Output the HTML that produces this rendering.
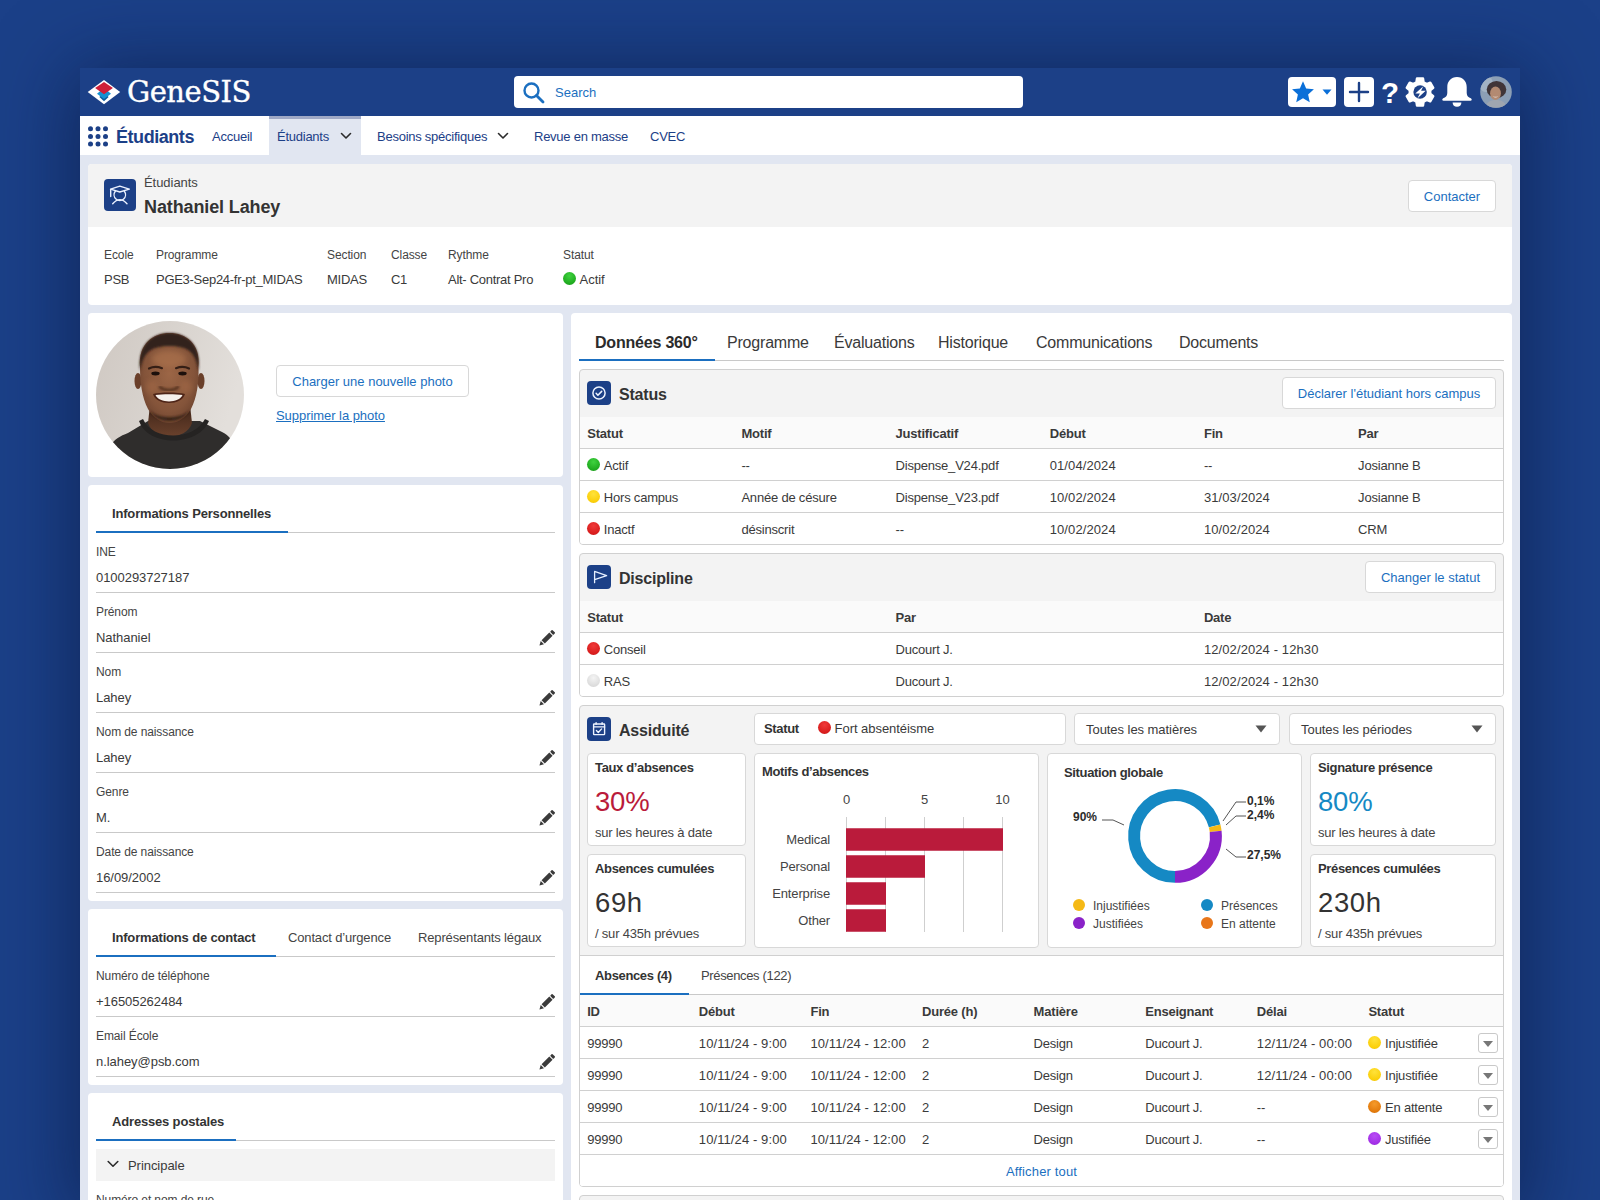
<!DOCTYPE html>
<html lang="fr">
<head>
<meta charset="utf-8">
<title>GeneSIS - Étudiants - Nathaniel Lahey</title>
<style>
*{box-sizing:border-box;margin:0;padding:0}
html,body{width:1600px;height:1200px;overflow:hidden}
body{font-family:"Liberation Sans",sans-serif;font-size:13px;color:#3a3a3a;
background:#1b4088;position:relative}
.abs{position:absolute}
#win{position:absolute;left:80px;top:68px;width:1440px;height:1140px;background:#e1e6f1;box-shadow:0 8px 72px 6px rgba(8,18,52,.55)}
#top{position:absolute;left:0;top:0;width:1440px;height:48px;background:#1c4087}
#logo-text{position:absolute;left:47px;top:4px;font-family:"DejaVu Serif","Liberation Serif",serif;font-size:29px;line-height:40px;color:#fff;letter-spacing:-.5px;-webkit-text-stroke:.35px #fff}
#search{position:absolute;left:434px;top:8px;width:509px;height:32px;background:#fff;border-radius:4px}
#search span{position:absolute;left:41px;top:0;line-height:34px;color:#1b6fc0;font-size:13px}
#nav{position:absolute;left:0;top:48px;width:1440px;height:39px;background:#fff}
#nav .app{position:absolute;left:36px;top:0;line-height:42px;font-size:18px;font-weight:bold;color:#1c4087;letter-spacing:-.45px}
#nav .it{position:absolute;top:0;height:39px;line-height:42px;color:#1c4087;font-size:13px;white-space:nowrap;letter-spacing:-.25px}
#nav .act{background:#e1e6f1;border-top:3px solid #9fa9c6;line-height:36px}
.card{position:absolute;background:#fff;border-radius:4px}
.btn{padding-top:1px;position:absolute;background:#fff;border:1px solid #d8d8d8;border-radius:4px;color:#1b6fc0;font-size:13px;text-align:center;white-space:nowrap}
.t{position:absolute;white-space:nowrap;line-height:16px;letter-spacing:-.05px}
.b{font-weight:bold;color:#333;letter-spacing:-.35px}
.lbl{color:#444;font-size:12px;letter-spacing:-.1px}
.blue{color:#1b6fc0}
.dot{display:inline-block;width:13px;height:13px;border-radius:50%;vertical-align:-1px;margin-right:3.600px}
.dg{background:radial-gradient(circle at 50% 30%,#3fd23f,#1faa1f 70%,#189018)}
.dy{background:radial-gradient(circle at 50% 30%,#ffe23a,#fbcf0a 70%,#e8b800)}
.dr{background:radial-gradient(circle at 50% 30%,#f03a3a,#d81c1c 70%,#b81212)}
.dw{background:radial-gradient(circle at 50% 30%,#f4f4f4,#dcdcdc 70%,#cfcfcf)}
.do{background:radial-gradient(circle at 50% 30%,#f59a2a,#e27a0c 70%,#c86606)}
.dp{background:radial-gradient(circle at 50% 30%,#b84cf5,#a22fe6 70%,#8a1fcc)}
.hr{position:absolute;height:1px;background:#c9c9c9}
.sec{position:absolute;border:1px solid #d0d0d0;border-radius:4px;background:#f3f3f3;overflow:hidden}
.ico{position:absolute;width:24px;height:24px;border-radius:4px;background:#1c4087}
.row{position:absolute;left:0;width:100%;height:32px;background:#fff;border-top:1px solid #d0d0d0}
.th{position:absolute;left:0;width:100%;background:#fafafa}
.c{position:absolute;top:0;line-height:33px;white-space:nowrap;font-size:13px;letter-spacing:-.2px}
.th .c{font-weight:bold;line-height:33px}
.kpi{position:absolute;background:#fff;border:1px solid #d8d8d8;border-radius:4px}
</style>
</head>
<body>
<div id="win">
  <div id="top">
    <svg class="abs" style="left:7px;top:11px" width="34" height="26" viewBox="0 0 34 26">
      <polygon points="17,1 33.200,13 17,25.200 0.700,13" fill="#fff"/>
      <polygon points="17,13.500 21.600,18 17,22.300 12.400,18" fill="#0b5c9e"/>
      <polygon points="17,9 24,14.700 17,19.900 10,14.700" fill="#1591d2"/>
      <polygon points="17,3 25.900,9.100 17,15.200 8.100,9.100" fill="#cf1f38"/>
    </svg>
    <div id="logo-text">GeneSIS</div>
    <div id="search">
      <svg class="abs" style="left:8px;top:5px" width="24" height="24" viewBox="0 0 24 24"><circle cx="9.5" cy="9.5" r="7" fill="none" stroke="#1b6fc0" stroke-width="2.4"/><path d="M14.5 14.5 L21 21" stroke="#1b6fc0" stroke-width="2.8" stroke-linecap="round"/></svg>
      <span>Search</span>
    </div>
    <!-- header right icons -->
    <div class="abs" style="left:1208px;top:9px;width:48px;height:30px;background:#fff;border-radius:4px">
      <svg class="abs" style="left:3px;top:2.500px" width="24" height="24" viewBox="0 0 22 22"><path d="M11 1.200 L13.900 7.800 L21 8.500 L15.700 13.300 L17.200 20.400 L11 16.700 L4.800 20.400 L6.300 13.300 L1 8.500 L8.100 7.800 Z" fill="#0a6fd8"/></svg>
      <svg class="abs" style="left:34px;top:12px" width="10" height="6" viewBox="0 0 10 6"><path d="M0.500 0.500 H9.500 L5 5.700Z" fill="#0a6fd8"/></svg>
    </div>
    <div class="abs" style="left:1264px;top:9px;width:30px;height:30px;background:#fff;border-radius:4px">
      <svg class="abs" style="left:0;top:0" width="30" height="30" viewBox="0 0 30 30"><path d="M15 6 V24 M6 15 H24" stroke="#1c4087" stroke-width="2.400" stroke-linecap="round"/></svg>
    </div>
    <div class="abs b" style="left:1301px;top:7.500px;width:18px;text-align:center;font-size:29.500px;line-height:34px;color:#fff;letter-spacing:0">?</div>
    <svg class="abs" style="left:1325px;top:8px" width="30" height="32" viewBox="0 0 30 32">
      <path d="M11.44 6.23 L11.99 2.43 L18.01 2.43 L18.56 6.23 L21.68 8.03 L25.25 6.61 L28.26 11.82 L25.24 14.19 L25.24 17.81 L28.26 20.18 L25.25 25.39 L21.68 23.97 L18.56 25.77 L18.01 29.57 L11.99 29.57 L11.44 25.77 L8.32 23.97 L4.75 25.39 L1.74 20.18 L4.76 17.81 L4.76 14.19 L1.74 11.82 L4.75 6.61 L8.32 8.03Z" fill="#fff" stroke="#fff" stroke-width="2.400" stroke-linejoin="round"/>
      <circle cx="15.100" cy="16" r="6.700" fill="#1c4087"/>
      <path d="M18.300 10.200 L10.300 17.500 H14.900 L12.300 22.400 L20.700 14.700 H16.100 Z" fill="#fff"/>
    </svg>
    <svg class="abs" style="left:1361px;top:8px" width="32" height="32" viewBox="0 0 32 32">
      <path d="M16 1 C10 1 6.300 5.500 6.300 11 V17 C6.300 20 4.500 21.500 2.200 22.300 C0.800 22.900 1 24.800 2.600 24.800 H29.400 C31 24.800 31.200 22.900 29.800 22.300 C27.500 21.500 25.700 20 25.700 17 V11 C25.700 5.500 22 1 16 1 Z" fill="#fff"/>
      <path d="M11.600 26.400 H20.400 C20.400 29 18.600 30.700 16 30.700 C13.400 30.700 11.600 29 11.600 26.400Z" fill="#fff"/>
    </svg>
    <svg class="abs" style="left:1400px;top:8px" width="32" height="32" viewBox="0 0 32 32">
      <defs><clipPath id="av"><circle cx="16" cy="16" r="15.800"/></clipPath><filter id="avb" x="-30%" y="-30%" width="160%" height="160%"><feGaussianBlur stdDeviation=".7"/></filter></defs>
      <g clip-path="url(#av)"><rect width="32" height="32" fill="#8c9fb5"/>
      <g filter="url(#avb)">
      <ellipse cx="6" cy="8" rx="7" ry="8" fill="#a3b3c4"/>
      <path d="M5 34 C6 26 10 24 16 24 C22 24 26 26 27 34Z" fill="#9fa6b0"/>
      <ellipse cx="16.500" cy="13.500" rx="9.800" ry="8.600" fill="#3f3538"/>
      <ellipse cx="15.500" cy="17.200" rx="5.400" ry="6.800" fill="#b38a72"/>
      <path d="M12.600 20.300 Q15.500 22.800 18.400 20.300 Q15.500 21.300 12.600 20.300Z" fill="#f3e8e2"/>
      </g></g>
    </svg>
  </div>
  <div id="nav">
    <svg class="abs" style="left:8px;top:10px" width="20" height="21" viewBox="0 0 20 21" fill="#1c4087"><circle cx="2.5" cy="2.8" r="2.500"/><circle cx="2.5" cy="10.399999999999999" r="2.500"/><circle cx="2.5" cy="18.0" r="2.500"/><circle cx="10.0" cy="2.8" r="2.500"/><circle cx="10.0" cy="10.399999999999999" r="2.500"/><circle cx="10.0" cy="18.0" r="2.500"/><circle cx="17.5" cy="2.8" r="2.500"/><circle cx="17.5" cy="10.399999999999999" r="2.500"/><circle cx="17.5" cy="18.0" r="2.500"/></svg>
    <div class="app">Étudiants</div>
    <div class="it" style="left:132px">Accueil</div>
    <div class="it act" style="left:189px;width:92px;padding-left:8px">Étudiants</div>
    <div class="it" style="left:297px">Besoins spécifiques</div>
    <div class="it" style="left:454px">Revue en masse</div>
    <div class="it" style="left:570px">CVEC</div>
    <svg class="abs" style="left:260px;top:16px" width="12" height="8" viewBox="0 0 12 8"><path d="M1.500 1.500 L6 6 L10.500 1.500" fill="none" stroke="#2b2b2b" stroke-width="1.600" stroke-linecap="round" stroke-linejoin="round"/></svg>
    <svg class="abs" style="left:417px;top:16px" width="12" height="8" viewBox="0 0 12 8"><path d="M1.500 1.500 L6 6 L10.500 1.500" fill="none" stroke="#2b2b2b" stroke-width="1.600" stroke-linecap="round" stroke-linejoin="round"/></svg>
  </div>

  <!-- record header -->
  <div class="card" id="rec" style="left:8px;top:96px;width:1424px;height:141px;overflow:hidden">
    <div class="abs" style="left:0;top:0;width:100%;height:63px;background:#f3f3f3"></div>
    <div class="abs" style="left:16px;top:15.400px;width:32px;height:32px;border-radius:4px;background:#1c4087">
      <svg width="32" height="32" viewBox="0 0 32 32" fill="none" stroke="#eaf1ff" stroke-width="1.400" stroke-linejoin="round" stroke-linecap="round">
        <path d="M6.600 10.200 L15.800 7.100 L25.300 10.200 L15.800 13 Z"/><path d="M6.700 10.500 V17.600"/><path d="M11.300 12.300 A5.700 5.700 0 1 0 20.300 12.300"/><path d="M8.700 24.700 Q15.800 16.600 23 24.700"/>
      </svg>
    </div>
    <div class="t" style="left:56px;top:11px;color:#444">Étudiants</div>
    <div class="t b" style="left:56px;top:31px;font-size:18px;line-height:24px;letter-spacing:-.12px">Nathaniel Lahey</div>
    <div class="btn" style="left:1320px;top:16px;width:88px;height:32px;line-height:30px">Contacter</div>
    <div class="t lbl" style="left:16px;top:82.600px">Ecole</div><div class="t" style="left:16px;top:108.200px;letter-spacing:-.28px">PSB</div>
    <div class="t lbl" style="left:68px;top:82.600px">Programme</div><div class="t" style="left:68px;top:108.200px;letter-spacing:-.28px">PGE3-Sep24-fr-pt_MIDAS</div>
    <div class="t lbl" style="left:239px;top:82.600px">Section</div><div class="t" style="left:239px;top:108.200px;letter-spacing:-.28px">MIDAS</div>
    <div class="t lbl" style="left:303px;top:82.600px">Classe</div><div class="t" style="left:303px;top:108.200px;letter-spacing:-.28px">C1</div>
    <div class="t lbl" style="left:360px;top:82.600px">Rythme</div><div class="t" style="left:360px;top:108.200px;letter-spacing:-.28px">Alt- Contrat Pro</div>
    <div class="t lbl" style="left:475px;top:82.600px">Statut</div><div class="t" style="left:475px;top:108.200px"><span class="dot dg"></span>Actif</div>
  </div>
  <!-- photo card -->
  <div class="card" style="left:8px;top:245px;width:475px;height:164px"></div>
  <svg class="abs" style="left:16px;top:253px" width="148" height="148" viewBox="0 0 148 148">
<defs><clipPath id="pc"><circle cx="74" cy="74" r="74"/></clipPath>
<linearGradient id="pbg" x1="0" y1="0" x2="1" y2="0.300"><stop offset="0" stop-color="#cfc8c2"/><stop offset=".55" stop-color="#d9d4cf"/><stop offset="1" stop-color="#e3dfdb"/></linearGradient>
<radialGradient id="skin" cx="50%" cy="45%" r="70%"><stop offset="0" stop-color="#9c6646"/><stop offset=".6" stop-color="#84543a"/><stop offset="1" stop-color="#5c3726"/></radialGradient>
<linearGradient id="neck" x1="0" y1="0" x2="0" y2="1"><stop offset="0" stop-color="#3e2418"/><stop offset="1" stop-color="#6a412c"/></linearGradient>
<filter id="b1" x="-20%" y="-20%" width="140%" height="140%"><feGaussianBlur stdDeviation="1.200"/></filter>
<filter id="b2" x="-30%" y="-30%" width="160%" height="160%"><feGaussianBlur stdDeviation="2.500"/></filter></defs>
<g clip-path="url(#pc)">
<rect width="148" height="148" fill="url(#pbg)"/>
<path d="M8 148 C10 126 16 118 32 112 L52 100 L104 100 L124 110 C138 116 142 128 144 148 Z" fill="#2f2d2c"/>
<path d="M54 84 L52 102 C58 120 90 120 96 102 L94 84 Z" fill="url(#neck)"/>
<path d="M47 98 C56 120 98 120 109 98 L113 100 C102 126 52 126 43 100 Z" fill="#252322"/>
<ellipse cx="42" cy="60" rx="3.500" ry="8" fill="#6a3f2a"/><ellipse cx="105" cy="60" rx="3.500" ry="8" fill="#6a3f2a"/>
<path d="M44 46 C42 22 58 12 73.500 12 C89 12 105 22 102.500 46 C103 62 101 76 95 88 C89 98 81 102 73.500 102 C66 102 58 98 52 88 C46 76 44 62 44 46 Z" fill="url(#skin)"/>
<path d="M44 50 C41 22 58 12 73.500 12 C89 12 106 22 102.500 50 C100 34 95 25 73.500 25 C52 25 47 34 44 50 Z" fill="#33211a" filter="url(#b1)"/>
<ellipse cx="73" cy="38" rx="17" ry="8" fill="#b07650" opacity=".55" filter="url(#b2)"/>
<ellipse cx="56" cy="66" rx="6" ry="7" fill="#a66c48" opacity=".5" filter="url(#b2)"/><ellipse cx="90" cy="66" rx="6" ry="7" fill="#a66c48" opacity=".5" filter="url(#b2)"/>
<path d="M53 47.500 Q59 44.500 66 47.200 M80 47.200 Q87 44.500 93 47.500" stroke="#24140e" stroke-width="2.200" fill="none" stroke-linecap="round" opacity=".85"/>
<ellipse cx="59.500" cy="52.500" rx="4.200" ry="1.900" fill="#1c100c"/><ellipse cx="86.500" cy="52.500" rx="4.200" ry="1.900" fill="#1c100c"/>
<path d="M64 66 C68 70 78 70 82 66" stroke="#3e2216" stroke-width="2.600" fill="none" stroke-linecap="round" opacity=".7" filter="url(#b1)"/>
<path d="M57 73 C64 71 82 71 89 73 C86 85 60 85 57 73 Z" fill="#4e2518"/>
<path d="M59.500 74 C66 73 80 73 86.500 74 C83 82.500 63 82.500 59.500 74 Z" fill="#f6f1ec"/>
<path d="M53 88 C60 104 87 104 94 88 C88 99 59 99 53 88 Z" fill="#2c1a12" opacity=".8" filter="url(#b1)"/>
</g></svg>
  <div class="btn" style="left:196px;top:297px;width:193px;height:32px;line-height:30px">Charger une nouvelle photo</div>
  <div class="t blue" style="left:196px;top:340.3px;text-decoration:underline">Supprimer la photo</div>
  <!-- Informations personnelles -->
  <div class="card" style="left:8px;top:417px;width:475px;height:416px"></div>
  <div class="t b" style="left:32px;top:437.8px;color:#333;letter-spacing:-.17px">Informations Personnelles</div>
  <div class="hr" style="left:16px;top:464px;width:459px"></div>
  <div class="abs" style="left:16px;top:463px;width:192px;height:2px;background:#1b6fc0"></div>
  <div class="t lbl" style="left:16px;top:476.2px;">INE</div>
  <div class="t " style="left:16px;top:501.5px;">0100293727187</div>
  <div class="hr" style="left:16px;top:524px;width:459px"></div>
  <div class="t lbl" style="left:16px;top:536.2px;">Prénom</div>
  <div class="t " style="left:16px;top:561.5px;">Nathaniel</div>
  <div class="hr" style="left:16px;top:584px;width:459px"></div>
  <svg class="abs" style="left:457.5px;top:560.8000000000001px" width="18" height="18" viewBox="0 0 18 18"><g transform="translate(8.350 9.650) rotate(-45)" fill="#3a3a3a"><path d="M-9.800 0 L-5.600 -2.300 V2.300Z"/><rect x="-4.500" y="-2.300" width="11" height="4.600"/><rect x="7.500" y="-2.300" width="2.900" height="4.600" rx=".8"/></g></svg>
  <div class="t lbl" style="left:16px;top:596.2px;">Nom</div>
  <div class="t " style="left:16px;top:621.5px;">Lahey</div>
  <div class="hr" style="left:16px;top:644px;width:459px"></div>
  <svg class="abs" style="left:457.5px;top:620.8000000000001px" width="18" height="18" viewBox="0 0 18 18"><g transform="translate(8.350 9.650) rotate(-45)" fill="#3a3a3a"><path d="M-9.800 0 L-5.600 -2.300 V2.300Z"/><rect x="-4.500" y="-2.300" width="11" height="4.600"/><rect x="7.500" y="-2.300" width="2.900" height="4.600" rx=".8"/></g></svg>
  <div class="t lbl" style="left:16px;top:656.2px;">Nom de naissance</div>
  <div class="t " style="left:16px;top:681.5px;">Lahey</div>
  <div class="hr" style="left:16px;top:704px;width:459px"></div>
  <svg class="abs" style="left:457.5px;top:680.8000000000001px" width="18" height="18" viewBox="0 0 18 18"><g transform="translate(8.350 9.650) rotate(-45)" fill="#3a3a3a"><path d="M-9.800 0 L-5.600 -2.300 V2.300Z"/><rect x="-4.500" y="-2.300" width="11" height="4.600"/><rect x="7.500" y="-2.300" width="2.900" height="4.600" rx=".8"/></g></svg>
  <div class="t lbl" style="left:16px;top:716.2px;">Genre</div>
  <div class="t " style="left:16px;top:741.5px;">M.</div>
  <div class="hr" style="left:16px;top:764px;width:459px"></div>
  <svg class="abs" style="left:457.5px;top:740.8000000000001px" width="18" height="18" viewBox="0 0 18 18"><g transform="translate(8.350 9.650) rotate(-45)" fill="#3a3a3a"><path d="M-9.800 0 L-5.600 -2.300 V2.300Z"/><rect x="-4.500" y="-2.300" width="11" height="4.600"/><rect x="7.500" y="-2.300" width="2.900" height="4.600" rx=".8"/></g></svg>
  <div class="t lbl" style="left:16px;top:776.2px;">Date de naissance</div>
  <div class="t " style="left:16px;top:801.5px;">16/09/2002</div>
  <div class="hr" style="left:16px;top:824px;width:459px"></div>
  <svg class="abs" style="left:457.5px;top:800.8000000000001px" width="18" height="18" viewBox="0 0 18 18"><g transform="translate(8.350 9.650) rotate(-45)" fill="#3a3a3a"><path d="M-9.800 0 L-5.600 -2.300 V2.300Z"/><rect x="-4.500" y="-2.300" width="11" height="4.600"/><rect x="7.500" y="-2.300" width="2.900" height="4.600" rx=".8"/></g></svg>
  <!-- Informations de contact -->
  <div class="card" style="left:8px;top:841px;width:475px;height:176px"></div>
  <div class="t b" style="left:32px;top:861.8px;color:#333;letter-spacing:-.17px">Informations de contact</div>
  <div class="t " style="left:208px;top:861.8px;color:#444;letter-spacing:-.15px">Contact d’urgence</div>
  <div class="t " style="left:338px;top:861.8px;color:#444;letter-spacing:-.15px">Représentants légaux</div>
  <div class="hr" style="left:16px;top:888px;width:459px"></div>
  <div class="abs" style="left:16px;top:887px;width:180px;height:2px;background:#1b6fc0"></div>
  <div class="t lbl" style="left:16px;top:900.2px;">Numéro de téléphone</div>
  <div class="t " style="left:16px;top:925.5px;">+16505262484</div>
  <div class="hr" style="left:16px;top:948px;width:459px"></div>
  <svg class="abs" style="left:457.5px;top:924.8000000000001px" width="18" height="18" viewBox="0 0 18 18"><g transform="translate(8.350 9.650) rotate(-45)" fill="#3a3a3a"><path d="M-9.800 0 L-5.600 -2.300 V2.300Z"/><rect x="-4.500" y="-2.300" width="11" height="4.600"/><rect x="7.500" y="-2.300" width="2.900" height="4.600" rx=".8"/></g></svg>
  <div class="t lbl" style="left:16px;top:960.2px;">Email École</div>
  <div class="t " style="left:16px;top:985.5px;">n.lahey@psb.com</div>
  <div class="hr" style="left:16px;top:1008px;width:459px"></div>
  <svg class="abs" style="left:457.5px;top:984.8px" width="18" height="18" viewBox="0 0 18 18"><g transform="translate(8.350 9.650) rotate(-45)" fill="#3a3a3a"><path d="M-9.800 0 L-5.600 -2.300 V2.300Z"/><rect x="-4.500" y="-2.300" width="11" height="4.600"/><rect x="7.500" y="-2.300" width="2.900" height="4.600" rx=".8"/></g></svg>
  <!-- Adresses postales -->
  <div class="card" style="left:8px;top:1025px;width:475px;height:200px"></div>
  <div class="t b" style="left:32px;top:1045.8px;color:#333;letter-spacing:-.17px">Adresses postales</div>
  <div class="hr" style="left:16px;top:1072px;width:459px"></div>
  <div class="abs" style="left:16px;top:1071px;width:140px;height:2px;background:#1b6fc0"></div>
  <div class="abs" style="left:16px;top:1081px;width:459px;height:32px;background:#f3f3f3"></div>
  <svg class="abs" style="left:27px;top:1092px" width="12" height="8" viewBox="0 0 12 8"><path d="M1.200 1.500 L6 6.200 L10.800 1.500" fill="none" stroke="#2b2b2b" stroke-width="1.600" stroke-linecap="round" stroke-linejoin="round"/></svg>
  <div class="t " style="left:48px;top:1089.8px;">Principale</div>
  <div class="t lbl" style="left:16px;top:1123.9px;">Numéro et nom de rue</div>
  <!-- right main card -->
  <div class="card" style="left:491px;top:245px;width:941px;height:980px"></div>
  <div class="t b" style="left:515px;top:264px;font-size:16px;line-height:22px;color:#2b2b2b;letter-spacing:-.2px">Données 360°</div>
  <div class="t " style="left:647px;top:264px;font-size:16px;line-height:22px;color:#3a3a3a;letter-spacing:-.2px">Programme</div>
  <div class="t " style="left:754px;top:264px;font-size:16px;line-height:22px;color:#3a3a3a;letter-spacing:-.2px">Évaluations</div>
  <div class="t " style="left:858px;top:264px;font-size:16px;line-height:22px;color:#3a3a3a;letter-spacing:-.2px">Historique</div>
  <div class="t " style="left:956px;top:264px;font-size:16px;line-height:22px;color:#3a3a3a;letter-spacing:-.2px">Communications</div>
  <div class="t " style="left:1099px;top:264px;font-size:16px;line-height:22px;color:#3a3a3a;letter-spacing:-.2px">Documents</div>
  <div class="hr" style="left:499px;top:292px;width:925px"></div>
  <div class="abs" style="left:499px;top:291px;width:136px;height:2px;background:#1b6fc0"></div>
  <div class="sec" style="left:499px;top:301px;width:925px;height:176px">
  <div class="ico" style="left:7px;top:11px"><svg width="24" height="24" viewBox="0 0 24 24" fill="none" stroke="#eef4ff" stroke-width="1.500" stroke-linecap="round" stroke-linejoin="round"><circle cx="12" cy="12" r="6.100"/><path d="M9.100 12.300 L10.900 14.200 L14.700 10.400"/></svg></div>
  <div class="t b" style="left:39px;top:13.500px;font-size:16px;line-height:22px;letter-spacing:-.2px">Status</div>
  <div class="btn" style="left:702px;top:7px;width:214px;height:32px;line-height:30px">Déclarer l'étudiant hors campus</div>
  <div class="th" style="top:47px;height:32px"><div class="c" style="left:7.2px">Statut</div><div class="c" style="left:161.4px">Motif</div><div class="c" style="left:315.5px">Justificatif</div><div class="c" style="left:469.7px">Début</div><div class="c" style="left:623.9px">Fin</div><div class="c" style="left:778.1px">Par</div></div>
  <div class="row" style="top:78px"><div class="c" style="left:7.2px"><span class="dot dg"></span>Actif</div><div class="c" style="left:161.4px">--</div><div class="c" style="left:315.5px">Dispense_V24.pdf</div><div class="c" style="left:469.7px;letter-spacing:.1px">01/04/2024</div><div class="c" style="left:623.9px">--</div><div class="c" style="left:778.1px">Josianne B</div></div>
  <div class="row" style="top:110px"><div class="c" style="left:7.2px"><span class="dot dy"></span>Hors campus</div><div class="c" style="left:161.4px">Année de césure</div><div class="c" style="left:315.5px">Dispense_V23.pdf</div><div class="c" style="left:469.7px;letter-spacing:.1px">10/02/2024</div><div class="c" style="left:623.9px;letter-spacing:.1px">31/03/2024</div><div class="c" style="left:778.1px">Josianne B</div></div>
  <div class="row" style="top:142px"><div class="c" style="left:7.2px"><span class="dot dr"></span>Inactf</div><div class="c" style="left:161.4px">désinscrit</div><div class="c" style="left:315.5px">--</div><div class="c" style="left:469.7px;letter-spacing:.1px">10/02/2024</div><div class="c" style="left:623.9px;letter-spacing:.1px">10/02/2024</div><div class="c" style="left:778.1px">CRM</div></div>
  </div>
  <div class="sec" style="left:499px;top:485px;width:925px;height:144px">
  <div class="ico" style="left:7px;top:11px"><svg width="24" height="24" viewBox="0 0 24 24" fill="none" stroke="#e6efff" stroke-width="1.300" stroke-linecap="round" stroke-linejoin="round"><path d="M7.600 17.700 V6.400 L19.600 10.700 L7.600 14.700"/></svg></div>
  <div class="t b" style="left:39px;top:13.500px;font-size:16px;line-height:22px;letter-spacing:-.2px">Discipline</div>
  <div class="btn" style="left:785px;top:7px;width:131px;height:32px;line-height:30px">Changer le statut</div>
  <div class="th" style="top:47px;height:32px"><div class="c" style="left:7.2px">Statut</div><div class="c" style="left:315.5px">Par</div><div class="c" style="left:623.9px">Date</div></div>
  <div class="row" style="top:78px"><div class="c" style="left:7.2px"><span class="dot dr"></span>Conseil</div><div class="c" style="left:315.5px">Ducourt J.</div><div class="c" style="left:623.9px;letter-spacing:.1px">12/02/2024 - 12h30</div></div>
  <div class="row" style="top:110px"><div class="c" style="left:7.2px"><span class="dot dw"></span>RAS</div><div class="c" style="left:315.5px">Ducourt J.</div><div class="c" style="left:623.9px;letter-spacing:.1px">12/02/2024 - 12h30</div></div>
  </div>
  <div class="sec" style="left:499px;top:637px;width:925px;height:482px">
  <div class="ico" style="left:7px;top:11px"><svg width="24" height="24" viewBox="0 0 24 24" fill="none" stroke="#eef4ff" stroke-width="1.400" stroke-linecap="round" stroke-linejoin="round"><rect x="6.600" y="7" width="11" height="10.600" rx=".6"/><path d="M6.600 9.900 H17.600 M9.100 5.600 V7.200 M15.100 5.600 V7.200 M9.400 13.600 L11.300 15.500 L14.600 11.900"/></svg></div>
  <div class="t b" style="left:39px;top:13.500px;font-size:16px;line-height:22px;letter-spacing:-.2px">Assiduité</div>
  <div class="kpi" style="left:174px;top:7px;width:312px;height:32px"><div class="t b" style="left:9px;top:7px">Statut</div><div class="t" style="left:63px;top:7px"><span class="dot dr"></span>Fort absentéisme</div></div>
  <div class="kpi" style="left:494px;top:7px;width:206px;height:32px"><div class="t" style="left:11px;top:8px">Toutes les matières</div><svg class="abs" style="right:12px;top:11px" width="12" height="8" viewBox="0 0 12 8"><path d="M0.500 0.500 H11.500 L6 7.500Z" fill="#555"/></svg></div>
  <div class="kpi" style="left:709px;top:7px;width:207px;height:32px"><div class="t" style="left:11px;top:8px">Toutes les périodes</div><svg class="abs" style="right:12px;top:11px" width="12" height="8" viewBox="0 0 12 8"><path d="M0.500 0.500 H11.500 L6 7.500Z" fill="#555"/></svg></div>
  <div class="kpi" style="left:7px;top:47px;width:159px;height:93px"><div class="t b" style="left:7px;top:6px">Taux d’absences</div><div class="t" style="left:7px;top:31px;font-size:27.500px;line-height:34px;color:#ba1b3b;letter-spacing:-.2px">30%</div><div class="t" style="left:7px;top:71px;color:#444;letter-spacing:-.2px">sur les heures à date</div></div>
  <div class="kpi" style="left:7px;top:148px;width:159px;height:93px"><div class="t b" style="left:7px;top:6px">Absences cumulées</div><div class="t" style="left:7px;top:31px;font-size:27.500px;line-height:34px;color:#333;letter-spacing:.6px">69h</div><div class="t" style="left:7px;top:71px;color:#444;letter-spacing:-.2px">/ sur 435h prévues</div></div>
  <div class="kpi" style="left:730px;top:47px;width:186px;height:93px"><div class="t b" style="left:7px;top:6px">Signature présence</div><div class="t" style="left:7px;top:31px;font-size:27.500px;line-height:34px;color:#1589c4;letter-spacing:-.2px">80%</div><div class="t" style="left:7px;top:71px;color:#444;letter-spacing:-.2px">sur les heures à date</div></div>
  <div class="kpi" style="left:730px;top:148px;width:186px;height:93px"><div class="t b" style="left:7px;top:6px">Présences cumulées</div><div class="t" style="left:7px;top:31px;font-size:27.500px;line-height:34px;color:#333;letter-spacing:.6px">230h</div><div class="t" style="left:7px;top:71px;color:#444;letter-spacing:-.2px">/ sur 435h prévues</div></div>
  <div class="kpi" style="left:174px;top:47px;width:285px;height:195px">
  <div class="t b" style="left:7px;top:10px">Motifs d’absences</div>
  <svg class="abs" style="left:0;top:0" width="284" height="193" viewBox="0 0 284 193" font-family="Liberation Sans, sans-serif" font-size="13" fill="#444">
  <rect x="91" y="63" width="1" height="115" fill="#cfcfcf"/>
  <rect x="130" y="63" width="1" height="115" fill="#cfcfcf"/>
  <rect x="169" y="63" width="1" height="115" fill="#cfcfcf"/>
  <rect x="208" y="63" width="1" height="115" fill="#cfcfcf"/>
  <rect x="247" y="63" width="1" height="115" fill="#cfcfcf"/>
  <text x="91.5" y="50" text-anchor="middle">0</text>
  <text x="169.5" y="50" text-anchor="middle">5</text>
  <text x="247.5" y="50" text-anchor="middle">10</text>
  <rect x="91" y="74.25" width="157" height="22.5" fill="#ba1b3b"/>
  <text x="75" y="90.2" text-anchor="end" letter-spacing="-.15">Medical</text>
  <rect x="91" y="101.25" width="79" height="22.5" fill="#ba1b3b"/>
  <text x="75" y="117.2" text-anchor="end" letter-spacing="-.15">Personal</text>
  <rect x="91" y="128.25" width="40" height="22.5" fill="#ba1b3b"/>
  <text x="75" y="144.2" text-anchor="end" letter-spacing="-.15">Enterprise</text>
  <rect x="91" y="155.25" width="40" height="22.5" fill="#ba1b3b"/>
  <text x="75" y="171.2" text-anchor="end" letter-spacing="-.15">Other</text>
  </svg></div>
  <div class="kpi" style="left:467px;top:47px;width:255px;height:195px">
  <div class="t b" style="left:16px;top:11px">Situation globale</div>
  <svg class="abs" style="left:0;top:0" width="254" height="193" viewBox="0 0 254 193" font-family="Liberation Sans, sans-serif" font-size="12" fill="#444">
  <path d="M127.00 122.90 A40.9 40.9 0 1 1 166.63 71.90" fill="none" stroke="#1589c4" stroke-width="11.9"/>
  <path d="M166.63 71.90 A40.9 40.9 0 0 1 167.65 77.44" fill="none" stroke="#f5b916" stroke-width="11.9"/>
  <path d="M167.65 77.44 A40.9 40.9 0 0 1 127.00 122.90" fill="none" stroke="#8a22c8" stroke-width="11.9"/>
  <path d="M54 66 H65 L76 71" stroke="#555" stroke-width="1" fill="none"/>
  <path d="M198 48 H188 L175 67" stroke="#555" stroke-width="1" fill="none"/>
  <path d="M198 62 H188 L178 71" stroke="#555" stroke-width="1" fill="none"/>
  <path d="M198 103 H188 L178 95" stroke="#555" stroke-width="1" fill="none"/>
  <text x="49" y="67" text-anchor="end" font-weight="bold" fill="#2b2b2b">90%</text>
  <text x="199" y="51" font-weight="bold" fill="#2b2b2b">0,1%</text>
  <text x="199" y="65" font-weight="bold" fill="#2b2b2b">2,4%</text>
  <text x="199" y="105" font-weight="bold" fill="#2b2b2b">27,5%</text>
  <circle cx="31" cy="151" r="6" fill="#f5b916"/><text x="45" y="155.5">Injustifiées</text>
  <circle cx="31" cy="169" r="6" fill="#8a22c8"/><text x="45" y="173.5">Justifiées</text>
  <circle cx="159" cy="151" r="6" fill="#1589c4"/><text x="173" y="155.5">Présences</text>
  <circle cx="159" cy="169" r="6" fill="#e8761a"/><text x="173" y="173.5">En attente</text>
  </svg></div>
  <div class="abs" style="left:0;top:249px;width:100%;height:300px;background:#fff;border-top:1px solid #d0d0d0"></div>
  <div class="t b" style="left:15px;top:262px">Absences (4)</div>
  <div class="t" style="left:121px;top:262px;color:#444;letter-spacing:-.35px">Présences (122)</div>
  <div class="hr" style="left:0;top:288px;width:100%"></div>
  <div class="abs" style="left:0;top:287px;width:109px;height:2px;background:#1b6fc0"></div>
  <div class="th" style="top:289px;height:32px"><div class="c" style="left:7.2px">ID</div><div class="c" style="left:118.8px">Début</div><div class="c" style="left:230.4px">Fin</div><div class="c" style="left:342px">Durée (h)</div><div class="c" style="left:453.6px">Matière</div><div class="c" style="left:565.2px">Enseignant</div><div class="c" style="left:676.8px">Délai</div><div class="c" style="left:788.4px">Statut</div></div>
  <div class="row" style="top:320px"><div class="c" style="left:7.2px">99990</div><div class="c" style="left:118.8px;letter-spacing:.1px">10/11/24 - 9:00</div><div class="c" style="left:230.4px;letter-spacing:.1px">10/11/24 - 12:00</div><div class="c" style="left:342px">2</div><div class="c" style="left:453.6px">Design</div><div class="c" style="left:565.2px">Ducourt J.</div><div class="c" style="left:676.8px;letter-spacing:.1px">12/11/24 - 00:00</div><div class="c" style="left:788.4px"><span class="dot dy"></span>Injustifiée</div><div class="abs" style="left:898px;top:6px;width:20px;height:20px;border:1px solid #c9c9c9;border-radius:3px;background:#fff"><svg class="abs" style="left:4px;top:6.500px" width="10" height="7" viewBox="0 0 10 7"><path d="M0 0 H10 L5 6Z" fill="#777"/></svg></div></div>
  <div class="row" style="top:352px"><div class="c" style="left:7.2px">99990</div><div class="c" style="left:118.8px;letter-spacing:.1px">10/11/24 - 9:00</div><div class="c" style="left:230.4px;letter-spacing:.1px">10/11/24 - 12:00</div><div class="c" style="left:342px">2</div><div class="c" style="left:453.6px">Design</div><div class="c" style="left:565.2px">Ducourt J.</div><div class="c" style="left:676.8px;letter-spacing:.1px">12/11/24 - 00:00</div><div class="c" style="left:788.4px"><span class="dot dy"></span>Injustifiée</div><div class="abs" style="left:898px;top:6px;width:20px;height:20px;border:1px solid #c9c9c9;border-radius:3px;background:#fff"><svg class="abs" style="left:4px;top:6.500px" width="10" height="7" viewBox="0 0 10 7"><path d="M0 0 H10 L5 6Z" fill="#777"/></svg></div></div>
  <div class="row" style="top:384px"><div class="c" style="left:7.2px">99990</div><div class="c" style="left:118.8px;letter-spacing:.1px">10/11/24 - 9:00</div><div class="c" style="left:230.4px;letter-spacing:.1px">10/11/24 - 12:00</div><div class="c" style="left:342px">2</div><div class="c" style="left:453.6px">Design</div><div class="c" style="left:565.2px">Ducourt J.</div><div class="c" style="left:676.8px">--</div><div class="c" style="left:788.4px"><span class="dot do"></span>En attente</div><div class="abs" style="left:898px;top:6px;width:20px;height:20px;border:1px solid #c9c9c9;border-radius:3px;background:#fff"><svg class="abs" style="left:4px;top:6.500px" width="10" height="7" viewBox="0 0 10 7"><path d="M0 0 H10 L5 6Z" fill="#777"/></svg></div></div>
  <div class="row" style="top:416px"><div class="c" style="left:7.2px">99990</div><div class="c" style="left:118.8px;letter-spacing:.1px">10/11/24 - 9:00</div><div class="c" style="left:230.4px;letter-spacing:.1px">10/11/24 - 12:00</div><div class="c" style="left:342px">2</div><div class="c" style="left:453.6px">Design</div><div class="c" style="left:565.2px">Ducourt J.</div><div class="c" style="left:676.8px">--</div><div class="c" style="left:788.4px"><span class="dot dp"></span>Justifiée</div><div class="abs" style="left:898px;top:6px;width:20px;height:20px;border:1px solid #c9c9c9;border-radius:3px;background:#fff"><svg class="abs" style="left:4px;top:6.500px" width="10" height="7" viewBox="0 0 10 7"><path d="M0 0 H10 L5 6Z" fill="#777"/></svg></div></div>
  <div class="row" style="top:448px"><div class="c blue" style="left:0;width:100%;text-align:center;letter-spacing:.15px">Afficher tout</div></div>
  </div>
  <div class="sec" style="left:499px;top:1127px;width:925px;height:60px"></div>
</div>
</body>
</html>
